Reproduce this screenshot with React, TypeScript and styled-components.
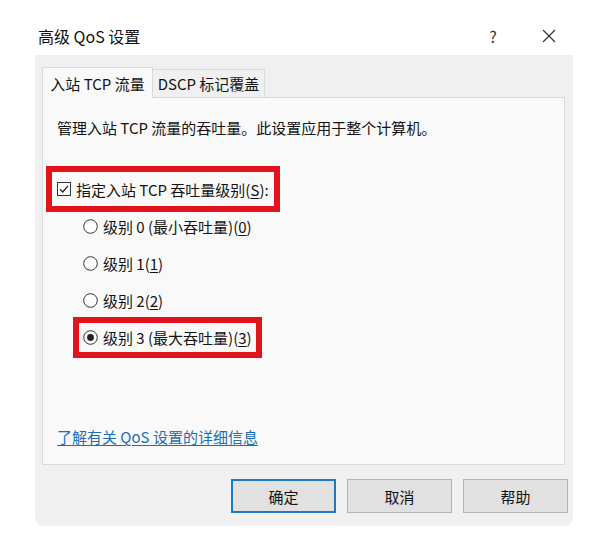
import React from "react";
import styled, { createGlobalStyle } from "styled-components";

const GlobalStyle = createGlobalStyle`
  html, body { margin: 0; padding: 0; background: #ffffff; }
  body {
    font-family: "Noto Sans CJK SC", "Noto Sans", sans-serif;
    color: #141414;
  }
`;

const Page = styled.div`
  width: 600px;
  height: 536px;
  background: #ffffff;
  overflow: hidden;
`;

const TitleBar = styled.div`
  display: flex;
  align-items: center;
  height: 55px;
  box-sizing: border-box;
  padding: 17px 36px 0 38px;
`;

const Title = styled.div`
  flex: 1;
  font-size: 16px;
  color: #111;
`;

const Controls = styled.div`
  display: flex;
  gap: 26px;
`;

const CtrlBtn = styled.div`
  width: 30px;
  height: 30px;
  display: flex;
  align-items: center;
  justify-content: center;
  font-size: 16px;
  color: #333;
`;

const Dialog = styled.div`
  margin-left: 35px;
  width: 538px;
  height: 471px;
  box-sizing: border-box;
  background: #f0f0f0;
  border-radius: 0 0 8px 8px;
  padding: 12px 5px 13px 7px;
  display: flex;
  flex-direction: column;
`;

const TabStrip = styled.div`
  display: flex;
  align-items: flex-end;
  height: 30px;
  position: relative;
  z-index: 1;
`;

const Tab = styled.div<{ $active?: boolean; $w: number }>`
  box-sizing: border-box;
  width: ${(p) => p.$w}px;
  height: ${(p) => (p.$active ? 31 : 28)}px;
  margin-bottom: ${(p) => (p.$active ? -1 : 0)}px;
  border: 1px solid #d9d9d9;
  border-bottom: none;
  ${(p) => (p.$active ? "" : "border-left: none;")}
  background: ${(p) => (p.$active ? "#f9f9f9" : "#f0f0f0")};
  display: flex;
  align-items: center;
  justify-content: center;
  font-size: 15px;
  color: #141414;
  white-space: nowrap;
`;

const Panel = styled.div`
  flex: 1;
  margin-right: 3px;
  box-sizing: border-box;
  border: 1px solid #d9d9d9;
  background: #f9f9f9;
  padding: 20px 14px 17px 14px;
  display: flex;
  flex-direction: column;
  align-items: flex-start;
`;

const Description = styled.p`
  margin: 0;
  font-size: 15px;
  line-height: 20px;
  white-space: nowrap;
`;

const CheckRow = styled.label`
  display: inline-flex;
  align-items: center;
  gap: 5px;
  height: 24px;
  margin-top: 39px;
  font-size: 15px;
  white-space: nowrap;
  outline: 6px solid #e3131b;
  outline-offset: 5px;
`;

const RadioList = styled.div`
  display: flex;
  flex-direction: column;
  align-items: flex-start;
  gap: 16px;
  margin-top: 15px;
  margin-left: 26px;
`;

const Option = styled.label<{ $marked?: boolean }>`
  display: inline-flex;
  align-items: center;
  gap: 5px;
  height: 21px;
  font-size: 15px;
  white-space: nowrap;
  outline: ${(p) => (p.$marked ? "6px solid #e3131b" : "none")};
  outline-offset: 4px;
`;

const Key = styled.span`
  text-decoration: underline;
  text-underline-offset: 2px;
`;

const Link = styled.a`
  margin-top: auto;
  font-size: 15px;
  line-height: 20px;
  color: #1a6fb5;
  text-decoration: underline;
  text-underline-offset: 2px;
  white-space: nowrap;
`;

const Footer = styled.div`
  display: flex;
  justify-content: flex-end;
  gap: 11px;
  margin-top: 14px;
`;

const Button = styled.button<{ $primary?: boolean }>`
  width: 105px;
  height: 34px;
  box-sizing: border-box;
  border: ${(p) => (p.$primary ? "2px solid #1e78c8" : "1px solid #b4b4b4")};
  background: #e1e1e1;
  font-family: inherit;
  font-size: 15px;
  color: #141414;
  padding: 0;
`;

const CheckIcon = () => (
  <svg width="14" height="14" viewBox="0 0 14 14">
    <rect x="0.5" y="0.5" width="13" height="13" fill="#fff" stroke="#333" />
    <polyline points="3,7.2 5.8,10 11,3.8" fill="none" stroke="#222" strokeWidth="1.3" />
  </svg>
);

const RadioIcon = ({ on }: { on?: boolean }) => (
  <svg width="15" height="15" viewBox="0 0 15 15">
    <circle cx="7.5" cy="7.5" r="6.8" fill="#fff" stroke="#333" />
    {on && <circle cx="7.5" cy="7.5" r="3.4" fill="#222" />}
  </svg>
);

const CloseIcon = () => (
  <svg width="14" height="14" viewBox="0 0 14 14">
    <path d="M1 1 L13 13 M13 1 L1 13" stroke="#333" strokeWidth="1.2" fill="none" />
  </svg>
);

export default function App() {
  return (
    <Page>
      <GlobalStyle />
      <TitleBar>
        <Title>高级 QoS 设置</Title>
        <Controls>
          <CtrlBtn>?</CtrlBtn>
          <CtrlBtn>
            <CloseIcon />
          </CtrlBtn>
        </Controls>
      </TitleBar>
      <Dialog>
        <TabStrip>
          <Tab $active $w={111}>入站 TCP 流量</Tab>
          <Tab $w={112}>DSCP 标记覆盖</Tab>
        </TabStrip>
        <Panel>
          <Description>管理入站 TCP 流量的吞吐量。此设置应用于整个计算机。</Description>
          <CheckRow>
            <CheckIcon />
            <span>
              指定入站 TCP 吞吐量级别(<Key>S</Key>):
            </span>
          </CheckRow>
          <RadioList>
            <Option>
              <RadioIcon />
              <span>
                级别 0 (最小吞吐量)(<Key>0</Key>)
              </span>
            </Option>
            <Option>
              <RadioIcon />
              <span>
                级别 1(<Key>1</Key>)
              </span>
            </Option>
            <Option>
              <RadioIcon />
              <span>
                级别 2(<Key>2</Key>)
              </span>
            </Option>
            <Option $marked>
              <RadioIcon on />
              <span>
                级别 3 (最大吞吐量)(<Key>3</Key>)
              </span>
            </Option>
          </RadioList>
          <Link>了解有关 QoS 设置的详细信息</Link>
        </Panel>
        <Footer>
          <Button $primary>确定</Button>
          <Button>取消</Button>
          <Button>帮助</Button>
        </Footer>
      </Dialog>
    </Page>
  );
}
